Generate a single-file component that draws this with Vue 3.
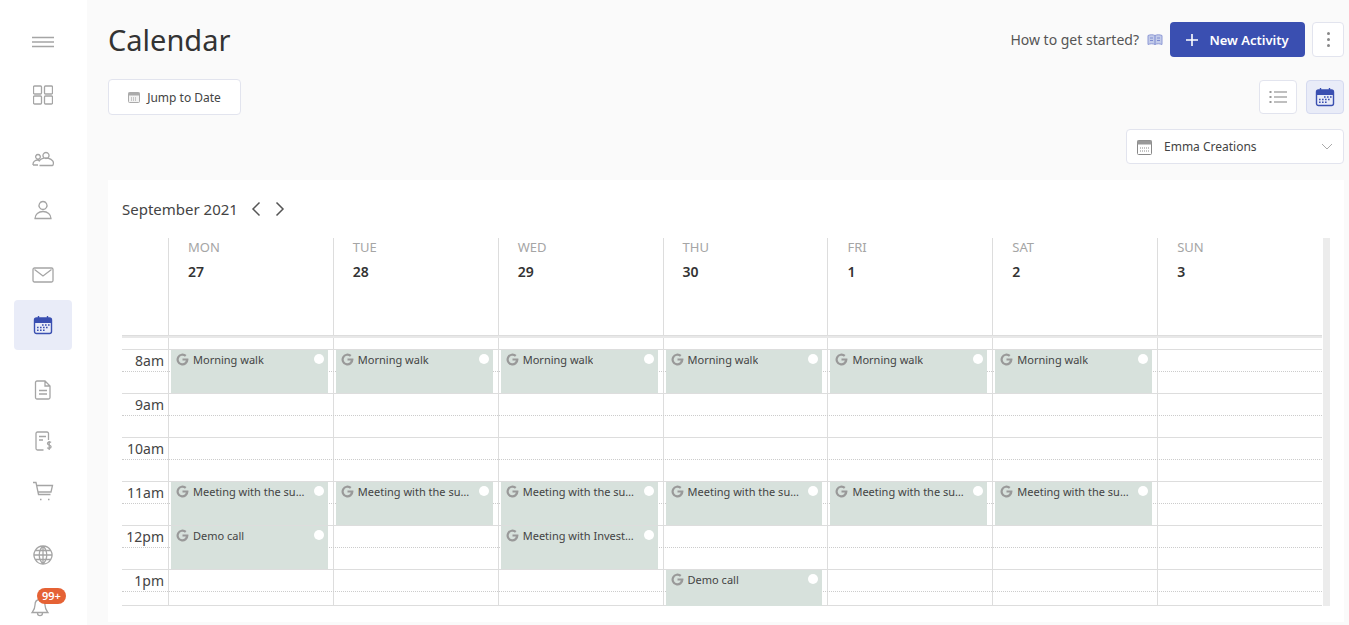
<template>
  <div class="page">
    <aside class="sidebar">
      <div v-for="(group, g) in navGroups" :key="g" class="nav-group" :class="group.cls">
        <div v-for="item in group.items" :key="item.name" class="nav-item" :class="{ active: item.active }">
          <svg v-if="item.active" class="cal-icon" viewBox="0 0 20 20" width="20" height="20">
            <path d="M1.5 5a2 2 0 0 1 2-2h13a2 2 0 0 1 2 2v3h-17z" fill="#3a4fb1" />
            <rect x="1.5" y="3" width="17" height="15.5" rx="2" fill="none" stroke="#3a4fb1" stroke-width="1.4" />
            <path d="M5.5 1v3M14.5 1v3" stroke="#3a4fb1" stroke-width="1.4" />
            <path d="M9 10h1.6M12 10h1.6M15 10h1.6M4 12.6h1.6M7 12.6h1.6M10 12.6h1.6M13 12.6h1.6M4 15.2h1.6M7 15.2h1.6M10 15.2h1.6" stroke="#3a4fb1" stroke-width="1.5" />
          </svg>
          <svg v-else :viewBox="`0 0 ${item.size} ${item.size}`" :width="item.size" :height="item.size" class="nav-icon" :class="item.name">
            <path v-for="d in item.paths" :key="d" :d="d" />
          </svg>
          <span v-if="item.badge" class="badge">{{ item.badge }}</span>
        </div>
      </div>
    </aside>

    <main class="main">
      <header class="top-row">
        <h1 class="title">Calendar</h1>
        <div class="top-actions">
          <span class="help">How to get started?</span>
          <svg class="book" viewBox="0 0 16 14" width="16" height="14">
            <path d="M1 2.5c2.500-1 5-1 7 0 2-1 4.500-1 7 0v9c-2.500-1-5-1-7 0-2-1-4.500-1-7 0z" fill="#c3cbe9" stroke="#8e9ad6" stroke-width="1" />
            <path d="M8 2.500v9M3 5h3M3 7.500h3M10 5h3M10 7.500h3" stroke="#7d8bd0" stroke-width="1" fill="none" />
          </svg>
          <button class="btn-primary">
            <svg viewBox="0 0 12 12" width="12" height="12"><path d="M6 0v12M0 6h12" stroke="#fff" stroke-width="1.6" /></svg>
            New Activity
          </button>
          <button class="btn-more"><span></span><span></span><span></span></button>
        </div>
      </header>

      <div class="tool-row">
        <button class="btn-jump">
          <svg viewBox="0 0 12 12" width="12" height="12">
            <rect x="0.5" y="1.500" width="11" height="10" rx="1" fill="#f2f2f2" stroke="#aaa" />
            <rect x="0.5" y="1.500" width="11" height="3" fill="#aaa" />
            <path d="M3 7h6M3 9h6" stroke="#999" stroke-dasharray="1 1" />
          </svg>
          Jump to Date
        </button>
        <div class="views">
          <button class="btn-view">
            <svg viewBox="0 0 18 14" width="18" height="14">
              <path d="M5 2h13M5 7h13M5 12h13" stroke="#aaa" stroke-width="1.500" />
              <path d="M0.500 2h2M0.500 7h2M0.500 12h2" stroke="#999" stroke-width="2" />
            </svg>
          </button>
          <button class="btn-view on">
            <svg viewBox="0 0 20 20" width="20" height="20">
              <path d="M1.500 5a2 2 0 0 1 2-2h13a2 2 0 0 1 2 2v3h-17z" fill="#3a4fb1" />
              <rect x="1.500" y="3" width="17" height="15.500" rx="2" fill="none" stroke="#3a4fb1" stroke-width="1.400" />
              <path d="M5.500 1v3M14.500 1v3" stroke="#3a4fb1" stroke-width="1.400" />
              <path d="M9 10h1.600M12 10h1.600M15 10h1.600M4 12.600h1.600M7 12.600h1.600M10 12.600h1.600M13 12.600h1.600M4 15.200h1.600M7 15.200h1.600M10 15.200h1.600" stroke="#3a4fb1" stroke-width="1.500" />
            </svg>
          </button>
        </div>
      </div>

      <div class="select-row">
        <div class="select">
          <svg viewBox="0 0 15 16" width="15" height="16">
            <rect x="0.500" y="1.500" width="14" height="14" rx="1" fill="#fff" stroke="#888" />
            <rect x="0.500" y="1.500" width="14" height="4" fill="#999" />
            <path d="M3 9h9M3 12h9" stroke="#888" stroke-dasharray="1 1" />
          </svg>
          <span class="select-label">Emma Creations</span>
          <svg class="chev" viewBox="0 0 12 7" width="12" height="7"><path d="M1 1l5 5 5-5" fill="none" stroke="#aaa" /></svg>
        </div>
      </div>

      <section class="card">
        <div class="month-row">
          <span class="month">September 2021</span>
          <svg viewBox="0 0 10 16" width="10" height="16"><path d="M8.500 1.500L2 8l6.500 6.500" fill="none" stroke="#555" stroke-width="1.500" /></svg>
          <svg viewBox="0 0 10 16" width="10" height="16"><path d="M1.500 1.500L8 8l-6.500 6.500" fill="none" stroke="#555" stroke-width="1.500" /></svg>
        </div>

        <div class="scroller">
          <div class="grid">
            <div class="row head">
              <div class="time-cell blank"></div>
              <div v-for="d in days" :key="d.name" class="day-head">
                <div class="day-name">{{ d.name }}</div>
                <div class="day-num">{{ d.num }}</div>
              </div>
            </div>
            <div class="row spacer">
              <div class="time-cell blank"></div>
              <div v-for="d in days" :key="d.name" class="spacer-cell"></div>
            </div>
            <div v-for="(h, i) in hours" :key="h" class="row hour" :class="{ last: i === hours.length - 1 }">
              <div class="time-cell">{{ h }}</div>
              <div v-for="(d, j) in days" :key="d.name" class="slot">
                <div v-if="eventAt(i, j)" class="event">
                  <svg class="g" viewBox="0 0 24 24" width="13" height="13">
                    <path d="M12 10.200v3.800h6.200c-.7 3-3.200 5-6.200 5a7 7 0 1 1 4.600-12.300l2.800-2.800A11 11 0 1 0 23 12c0-.6-.1-1.200-.2-1.800z" fill="#999" />
                  </svg>
                  <span class="event-title">{{ eventAt(i, j) }}</span>
                  <span class="dot"></span>
                </div>
              </div>
            </div>
          </div>
          <div class="scrollbar"></div>
        </div>
      </section>
    </main>
  </div>
</template>

<script setup>
const navGroups = [
  { cls: "g-menu", items: [{ name: "menu", size: 22, paths: ["M0 6.500h22M0 11h22M0 15.500h22"] }] },
  { cls: "g-dash", items: [{ name: "dash", size: 20, paths: ["M1.500 1h6a1 1 0 0 1 1 1v6a1 1 0 0 1-1 1h-6a1 1 0 0 1-1-1V2a1 1 0 0 1 1-1zM12.500 1h6a1 1 0 0 1 1 1v6a1 1 0 0 1-1 1h-6a1 1 0 0 1-1-1V2a1 1 0 0 1 1-1zM1.500 11h6a1 1 0 0 1 1 1v6a1 1 0 0 1-1 1h-6a1 1 0 0 1-1-1v-6a1 1 0 0 1 1-1zM12.500 11h6a1 1 0 0 1 1 1v6a1 1 0 0 1-1 1h-6a1 1 0 0 1-1-1v-6a1 1 0 0 1 1-1z"] }] },
  { cls: "g-people", items: [
    { name: "users", size: 22, paths: ["M14 4.500a3 3 0 1 1-.01 0zM7 13.500a7 5 0 0 1 14 3.500 .5 .5 0 0 1-.5 .5H7.500M6 6.500a2.300 2.300 0 1 1-.01 0zM1 17c-.3-3 2-5 4.500-5 1 0 1.700.2 2.500.6M1 17h5"] },
    { name: "user", size: 22, paths: ["M11 2.500a4 4 0 1 1-.01 0zM3 19.500c0-4 3.500-7 8-7s8 3 8 7z"] }
  ] },
  { cls: "g-comm", items: [
    { name: "mail", size: 22, paths: ["M2.500 4h17a1.500 1.500 0 0 1 1.500 1.500v11a1.500 1.500 0 0 1-1.500 1.500h-17A1.500 1.500 0 0 1 1 16.500v-11A1.500 1.500 0 0 1 2.500 4zM2.500 5.500L11 12l8.500-6.500"] },
    { name: "cal", active: true }
  ] },
  { cls: "g-docs", items: [
    { name: "doc", size: 20, paths: ["M4 1h8l5 5v11.500a1.500 1.500 0 0 1-1.500 1.500h-11.500a1.500 1.500 0 0 1-1.500-1.500V2.500A1.500 1.500 0 0 1 4 1zM12 1v5h5M6 10.500h8M6 14h8"] },
    { name: "invoice", size: 20, paths: ["M15.500 9V2.500A1.500 1.500 0 0 0 14 1H4.500A1.500 1.500 0 0 0 3 2.500v15A1.500 1.500 0 0 0 4.500 19h6M6 5.500h7M6 9h4M18 11.500c-.5-.7-3.500-1-3.500 1 0 2 3.600 1.200 3.600 3.200 0 2-3.200 1.800-3.800 1M16.200 10v9"] },
    { name: "cart", size: 22, paths: ["M1 2.500h3l2.500 12h12M5 5.500h15.500l-1.500 6.500H6M8 19.500h1.500M16 19.500h1.500"] }
  ] },
  { cls: "g-globe", items: [{ name: "globe", size: 20, paths: ["M10 1a9 9 0 1 1-.01 0zM10 1c-5 5-5 13 0 18M10 1c5 5 5 13 0 18M1 10h18M2.500 5.500h15M2.500 14.500h15M10 1v18"] }] },
  { cls: "g-bell", items: [{ name: "bell", size: 20, badge: "99+", paths: ["M10 1.500c-3.500 0-5 2.500-5 5.500 0 4-2 6-3 7.500h16c-1-1.500-3-3.500-3-7.500 0-3-1.500-5.500-5-5.500zM7.500 15c0 3.500 5 3.500 5 0"] }] }
];

const days = [
  { name: "MON", num: 27 },
  { name: "TUE", num: 28 },
  { name: "WED", num: 29 },
  { name: "THU", num: 30 },
  { name: "FRI", num: 1 },
  { name: "SAT", num: 2 },
  { name: "SUN", num: 3 }
];

const hours = ["8am", "9am", "10am", "11am", "12pm", "1pm"];

const eventMap = {
  "0": { 0: "Morning walk", 1: "Morning walk", 2: "Morning walk", 3: "Morning walk", 4: "Morning walk", 5: "Morning walk" },
  "3": { 0: "Meeting with the supplier", 1: "Meeting with the supplier", 2: "Meeting with the supplier", 3: "Meeting with the supplier", 4: "Meeting with the supplier", 5: "Meeting with the supplier" },
  "4": { 0: "Demo call", 2: "Meeting with Investors" },
  "5": { 3: "Demo call" }
};

function eventAt(hour, day) {
  return eventMap[hour] ? eventMap[hour][day] : null;
}
</script>

<style>
html,
body {
  margin: 0;
  height: 100%;
  overflow: hidden;
}
</style>

<style scoped>
.page {
  display: flex;
  height: 625px;
  overflow: hidden;
  background: #fafafa;
  font-family: "Noto Sans", "Open Sans", sans-serif;
  color: #333;
}

.sidebar {
  flex: 0 0 87px;
  background: #fff;
  padding-top: 17px;
  box-sizing: border-box;
}
.nav-group {
  display: flex;
  flex-direction: column;
}
.g-dash { margin-top: 3px; }
.g-people { margin-top: 14px; gap: 1px; }
.g-comm { margin-top: 15px; }
.g-docs { margin-top: 15px; gap: 0.5px; }
.g-globe { margin-top: 14px; }
.g-bell { margin-top: 3px; }

.nav-item {
  position: relative;
  height: 50px;
  margin: 0 15px 0 14px;
  display: flex;
  align-items: center;
  justify-content: center;
  border-radius: 4px;
}
.nav-item.active {
  background: #e9ecf8;
}
.nav-icon {
  fill: none;
  stroke: #a5a5a5;
  stroke-width: 1.3;
}
.nav-icon.menu {
  stroke-width: 1.500;
}
.nav-icon.bell {
  margin-left: -7px;
}
.badge {
  position: absolute;
  top: 5px;
  left: 23px;
  padding: 0 5px;
  height: 16px;
  line-height: 15px;
  border-radius: 8px;
  background: #e56235;
  color: #fff;
  font-size: 11px;
  font-weight: 600;
}

.main {
  flex: 1;
  min-width: 0;
  padding: 0 5px 0 21px;
}

.top-row {
  display: flex;
  justify-content: space-between;
  align-items: center;
  padding-top: 22px;
  height: 35px;
}
.title {
  margin: 0;
  font-size: 29px;
  font-weight: 400;
  color: #333;
  line-height: 35px;
}
.top-actions {
  display: flex;
  align-items: center;
}
.help {
  font-size: 14px;
  color: #555;
}
.book {
  margin: 0 7px 0 8px;
}
button {
  font-family: inherit;
  box-sizing: border-box;
  cursor: pointer;
}
.btn-primary {
  width: 135px;
  height: 35px;
  display: flex;
  align-items: center;
  justify-content: center;
  gap: 11px;
  background: #3a4fb1;
  border: 0;
  border-radius: 4px;
  color: #fff;
  font-size: 13px;
  font-weight: 600;
}
.btn-more {
  margin-left: 7px;
  width: 32px;
  height: 35px;
  display: flex;
  flex-direction: column;
  align-items: center;
  justify-content: center;
  gap: 3px;
  padding: 0;
  background: #fff;
  border: 1px solid #e2e4ee;
  border-radius: 4px;
}
.btn-more span {
  width: 3px;
  height: 3px;
  border-radius: 50%;
  background: #888;
}

.tool-row {
  display: flex;
  justify-content: space-between;
  align-items: center;
  margin-top: 22px;
  height: 36px;
}
.btn-jump {
  width: 133px;
  height: 36px;
  display: flex;
  align-items: center;
  justify-content: center;
  gap: 7px;
  background: #fff;
  border: 1px solid #e2e4ee;
  border-radius: 4px;
  font-size: 12px;
  color: #444;
}
.views {
  display: flex;
  gap: 9px;
}
.btn-view {
  width: 38px;
  height: 34px;
  display: flex;
  align-items: center;
  justify-content: center;
  padding: 0;
  background: #fff;
  border: 1px solid #e2e4ee;
  border-radius: 4px;
}
.btn-view.on {
  background: #e9ecf8;
  border-color: #d5daf0;
}

.select-row {
  display: flex;
  justify-content: flex-end;
  margin-top: 14px;
}
.select {
  width: 218px;
  height: 35px;
  box-sizing: border-box;
  display: flex;
  align-items: center;
  padding: 0 10px;
  background: #fff;
  border: 1px solid #e2e4ee;
  border-radius: 4px;
}
.select-label {
  flex: 1;
  margin-left: 12px;
  font-size: 12px;
  color: #444;
}

.card {
  margin-top: 16px;
  height: 442px;
  background: #fff;
  padding: 0 14px;
  box-sizing: border-box;
}
.month-row {
  display: flex;
  align-items: center;
  height: 58px;
  gap: 14px;
}
.month {
  font-size: 15px;
  color: #444;
  margin-right: -1px;
}

.scroller {
  display: flex;
  width: 1208px;
}
.grid {
  width: 1200px;
  flex: none;
}
.scrollbar {
  width: 7px;
  margin-left: 1px;
  background: #ececec;
}
.row {
  display: grid;
  grid-template-columns: 46px repeat(7, 1fr);
}
.head {
  height: 98px;
  border-bottom: 1px solid #ddd;
  box-sizing: border-box;
}
.day-head {
  border-left: 1px solid #ddd;
  padding-left: 19px;
}
.day-name {
  font-size: 13px;
  color: #a5a5a5;
  line-height: 18px;
}
.day-num {
  margin-top: 7px;
  font-size: 14px;
  font-weight: 600;
  color: #333;
  line-height: 18px;
}
.spacer {
  height: 13px;
  border-top: 2px solid #e8e8e8;
  box-sizing: border-box;
}
.spacer-cell {
  border-left: 1px solid #ddd;
}
.hour {
  height: 44px;
  box-sizing: border-box;
  border-top: 1px solid #ddd;
  position: relative;
}
.hour::after {
  content: "";
  position: absolute;
  left: 0;
  right: 0;
  top: 21px;
  border-top: 1px dotted #ccc;
}
.hour.last {
  height: 37px;
  border-bottom: 1px solid #ddd;
}
.time-cell {
  padding-right: 4px;
  text-align: right;
  font-size: 14px;
  line-height: 21px;
  color: #444;
}
.slot {
  position: relative;
  border-left: 1px solid #ddd;
}
.event {
  position: absolute;
  z-index: 1;
  top: 0;
  left: 2px;
  right: 5px;
  height: 43px;
  display: flex;
  align-items: flex-start;
  padding: 3px 4px 0 5px;
  box-sizing: border-box;
  background: #d7e1dc;
}
.hour.last .event {
  height: 36px;
}
.g {
  flex: none;
  margin-top: 0;
}
.event-title {
  margin-left: 4px;
  max-width: 113px;
  white-space: nowrap;
  overflow: hidden;
  text-overflow: ellipsis;
  font-size: 11px;
  line-height: 14px;
  color: #444;
}
.dot {
  margin-left: auto;
  margin-top: 1px;
  width: 10px;
  height: 10px;
  border-radius: 50%;
  background: #fff;
}
</style>
